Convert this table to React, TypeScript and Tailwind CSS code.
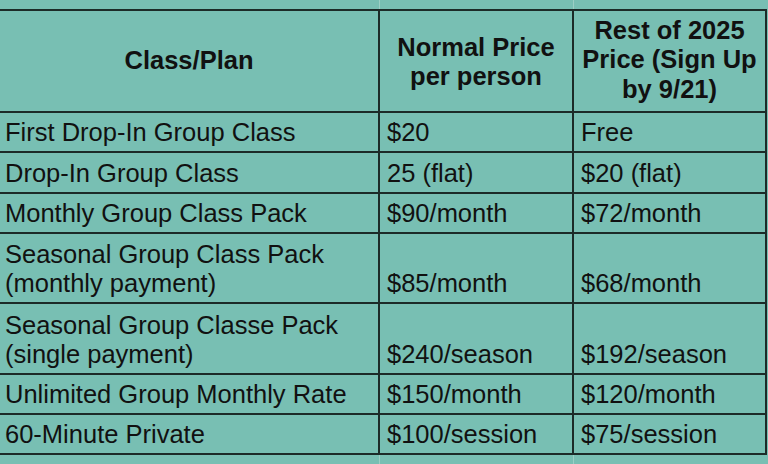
const rows: { plan: string[]; normal: string; rest: string; h: string }[] = [
  { plan: ['First Drop-In Group Class'], normal: '$20', rest: 'Free', h: 'h-[40px]' },
  { plan: ['Drop-In Group Class'], normal: '25 (flat)', rest: '$20 (flat)', h: 'h-[41px]' },
  { plan: ['Monthly Group Class Pack'], normal: '$90/month', rest: '$72/month', h: 'h-[40px]' },
  { plan: ['Seasonal Group Class Pack', '(monthly payment)'], normal: '$85/month', rest: '$68/month', h: 'h-[70px]' },
  { plan: ['Seasonal Group Classe Pack', '(single payment)'], normal: '$240/season', rest: '$192/season', h: 'h-[71px]' },
  { plan: ['Unlimited Group Monthly Rate'], normal: '$150/month', rest: '$120/month', h: 'h-[40px]' },
  { plan: ['60-Minute Private'], normal: '$100/session', rest: '$75/session', h: 'h-[40px]' },
];

export default function App() {
  return (
    <div
      className="w-[768px] h-[464px] overflow-hidden bg-[#78bfb3] text-[#111]"
      style={{ fontFamily: '"Liberation Sans", Arial, sans-serif' }}
    >
      {/* spreadsheet gridlines above */}
      <div className="grid grid-cols-[380px_194px_194px] h-[9px]">
        <div className="border-r border-[#9ccfc5]" />
        <div className="border-r border-[#9ccfc5]" />
        <div />
      </div>

      <div className="w-[767px] border-t-2 border-[#1c2b28]">
        {/* header */}
        <div className="grid grid-cols-[380px_194px_193px] h-[102px] border-b-2 border-[#1c2b28] font-bold text-[25.5px] leading-[29.5px] text-center">
          <div className="border-r-2 border-[#1c2b28] flex items-center justify-center">Class/Plan</div>
          <div className="border-r-2 border-[#1c2b28] flex items-center justify-center pt-[2px]">
            Normal Price
            <br />
            per person
          </div>
          <div className="border-r-2 border-[#1c2b28] flex items-center justify-center pb-[2px]">
            Rest of 2025
            <br />
            Price (Sign Up
            <br />
            by 9/21)
          </div>
        </div>

        {/* body */}
        {rows.map((r) => (
          <div
            key={r.plan.join(' ')}
            className={`grid grid-cols-[380px_194px_193px] border-b-2 border-[#1c2b28] text-[25.5px] leading-[29px] ${r.h}`}
          >
            <div className="border-r-2 border-[#1c2b28] flex flex-col justify-end pl-[5px] pb-[4px]">
              {r.plan.map((l) => (
                <span key={l}>{l}</span>
              ))}
            </div>
            <div className="border-r-2 border-[#1c2b28] flex items-end pl-[7px] pb-[4px]">{r.normal}</div>
            <div className="border-r-2 border-[#1c2b28] flex items-end pl-[7px] pb-[4px]">{r.rest}</div>
          </div>
        ))}
      </div>

      {/* spreadsheet gridlines below */}
      <div className="grid grid-cols-[380px_194px_194px] h-[10px]">
        <div className="border-r border-[#9ccfc5]" />
        <div className="border-r border-[#9ccfc5]" />
        <div />
      </div>
    </div>
  );
}
